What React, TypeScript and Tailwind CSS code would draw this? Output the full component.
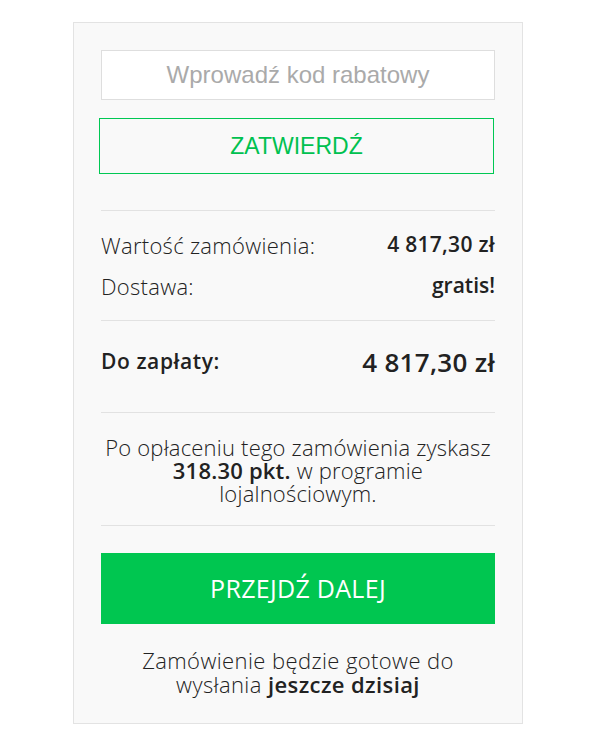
import React from 'react';

const font = { fontFamily: '"Open Sans", "Noto Sans", sans-serif' };

const Divider: React.FC = () => <div className="h-px bg-[#e2e2e2]" />;

const App: React.FC = () => {
  return (
    <div className="min-h-[749px] w-[594px] bg-white pt-[22px]">
      <div
        className="ml-[73px] w-[450px] border border-[#e3e3e3] bg-[#f9f9f9] px-[27px] pt-[27px] pb-[27px] text-[#222]"
        style={font}
      >
        {/* Coupon */}
        <input
          placeholder="Wprowadź kod rabatowy"
          className="block h-[50px] w-full border border-[#dedede] bg-white text-center text-[24px] text-[#333] outline-none placeholder:text-[#aaa] font-['Liberation_Sans',Arial,sans-serif]"
        />
        <button className="mt-[18px] ml-[-2px] block h-[56px] w-[395px] border border-[#00c853] bg-transparent text-center text-[23px] text-[#00c150] font-['Liberation_Sans',Arial,sans-serif]">
          ZATWIERDŹ
        </button>

        <div className="mt-[36px]">
          <Divider />
        </div>

        {/* Summary */}
        <div className="pt-[20px] pb-[20px] text-[22px]">
          <div className="flex h-[28px] items-center justify-between">
            <span className="font-light tracking-[0.3px]">Wartość zamówienia:</span>
            <span className="text-[21px] font-semibold tracking-[0.3px]">4 817,30 zł</span>
          </div>
          <div className="mt-[13px] flex h-[28px] items-center justify-between">
            <span className="font-light tracking-[0.3px]">Dostawa:</span>
            <span className="text-[21px] font-semibold">gratis!</span>
          </div>
        </div>
        <Divider />

        <div className="flex h-[91px] items-center justify-between pb-[9px]">
          <span className="text-[21px] font-semibold tracking-[0.6px]">Do zapłaty:</span>
          <span className="text-[26px] font-semibold tracking-[0.3px]">4 817,30 zł</span>
        </div>
        <Divider />

        <p className="pt-[23px] pb-[20px] text-center text-[22px] leading-[23px] font-light tracking-[0.2px]">
          Po opłaceniu tego zamówienia zyskasz
          <br />
          <span className="font-semibold">318.30 pkt.</span> w programie
          <br />
          lojalnościowym.
        </p>
        <Divider />

        <button className="mt-[27px] flex h-[71px] w-full items-center justify-center bg-[#00c650] text-[25px] tracking-[0.3px] text-white">
          PRZEJDŹ DALEJ
        </button>

        <p className="mt-[24px] text-center text-[22px] leading-[24px] font-light tracking-[0.4px]">
          Zamówienie będzie gotowe do
          <br />
          wysłania <span className="font-semibold">jeszcze dzisiaj</span>
        </p>
      </div>
    </div>
  );
};

export default App;
